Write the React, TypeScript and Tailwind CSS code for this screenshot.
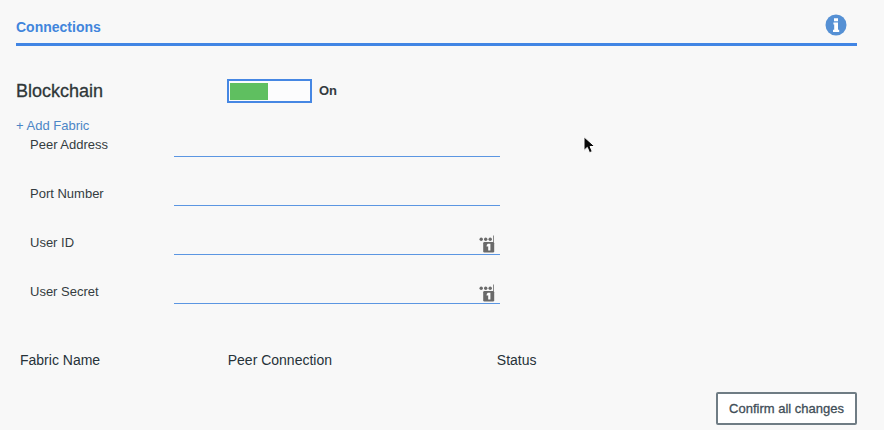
import { useState } from "react";

function InfoIcon() {
  return (
    <svg width="22" height="22" viewBox="0 0 22 22" aria-hidden="true">
      <circle cx="11" cy="11" r="10.5" fill="#5590d4" />
      <path d="M9 4.2h4v3H9zM8.4 8.4h4.6v7.4h1.2v2.2H8v-2.2h1.2v-5.2h-.8z" fill="#fff" />
    </svg>
  );
}

function KeyfillIcon() {
  return (
    <svg width="17" height="18" viewBox="0 0 17 18" aria-hidden="true">
      <g fill="#6a6a6a">
        <circle cx="2.2" cy="4.2" r="1.7" />
        <circle cx="6.7" cy="4.2" r="1.7" />
        <circle cx="11.2" cy="4.2" r="1.7" />
        <rect x="14" y="0.5" width="1" height="7" fill="#8a8a8a" />
        <rect x="4.2" y="7" width="11" height="10.5" rx="1.2" />
      </g>
      <path d="M8.8 8.8h2.6v6.6H9.2v-4.2l-1.5.6V9.9z" fill="#fff" />
    </svg>
  );
}

function Pointer() {
  return (
    <svg
      className="pointer-events-none absolute top-[136px] left-[583px]"
      width="13"
      height="18"
      viewBox="0 0 13 18"
      aria-hidden="true"
    >
      <path
        d="M1 0.8v13.6l3.3-3 2.2 5.3 2.8-1.2-2.2-5h4.7z"
        fill="#0a0a0a"
        stroke="#fff"
        strokeWidth="1"
      />
    </svg>
  );
}

type FieldProps = { id: string; label: string; type?: string; keyfill?: boolean };

function Field({ id, label, type = "text", keyfill = false }: FieldProps) {
  return (
    <div className="flex pl-3.5">
      <label htmlFor={id} className="w-36 shrink-0 text-[13px] leading-5">
        {label}
      </label>
      <div className="flex h-[22px] w-full max-w-[326px] items-center border-b border-[#5b96e2] pr-1">
        <input
          id={id}
          type={type}
          autoComplete="off"
          className="h-full min-w-0 flex-1 bg-transparent text-[13px] outline-none"
        />
        {keyfill && <KeyfillIcon />}
      </div>
    </div>
  );
}

export default function App() {
  const [on, setOn] = useState(true);

  return (
    <main className="relative min-h-screen bg-[#f8f8f8] pt-3.5 pr-[27px] pb-1 pl-4 font-['Liberation_Sans',Arial,sans-serif] text-[#343c3f]">
      <header className="flex h-8 justify-between border-b-3 border-[#4185e4]">
        <h1 className="text-sm leading-[26px] font-bold text-[#4185dc]">Connections</h1>
        <button type="button" aria-label="Information" className="mr-2.5 h-[22px]">
          <InfoIcon />
        </button>
      </header>

      <section className="mt-[33px]">
        <div className="flex h-6 items-center">
          <h2 className="w-[211px] text-lg leading-6 text-[#2f3739] [-webkit-text-stroke:0.3px]">
            Blockchain
          </h2>
          <label className="flex items-center gap-[7px] text-[13px] font-bold">
            <input
              type="checkbox"
              role="switch"
              checked={on}
              onChange={(e) => setOn(e.target.checked)}
              className="flex h-6 w-[85px] appearance-none items-center justify-end border-2 border-[#4687e3] bg-[#fcfcfd] px-px before:h-[17px] before:w-[38px] before:bg-[#b5b5b5] checked:justify-start checked:before:bg-[#5fbf60]"
            />
            {on ? "On" : "Off"}
          </label>
        </div>

        <button type="button" className="mt-3.5 block text-[13px] leading-[18px] text-[#4c86c6]">
          + Add Fabric
        </button>

        <form className="flex flex-col gap-[27px]">
          <Field id="peer-address" label="Peer Address" />
          <Field id="port-number" label="Port Number" />
          <Field id="user-id" label="User ID" keyfill />
          <Field id="user-secret" label="User Secret" type="password" keyfill />
        </form>
      </section>

      <table className="mt-[46px] w-full table-fixed text-left text-sm text-[#263238]">
        <thead>
          <tr>
            <th className="w-[24.7%] pl-1 font-normal">Fabric Name</th>
            <th className="w-[32%] pl-1 font-normal">Peer Connection</th>
            <th className="pl-1 font-normal">Status</th>
          </tr>
        </thead>
      </table>

      <div className="mt-[22px] flex justify-end">
        <button
          type="button"
          className="h-[33px] w-[141px] rounded-xs border-2 border-[#6f7c84] bg-white text-[13px] text-[#3f4e57] [-webkit-text-stroke:0.3px]"
        >
          Confirm all changes
        </button>
      </div>

      <Pointer />
    </main>
  );
}
